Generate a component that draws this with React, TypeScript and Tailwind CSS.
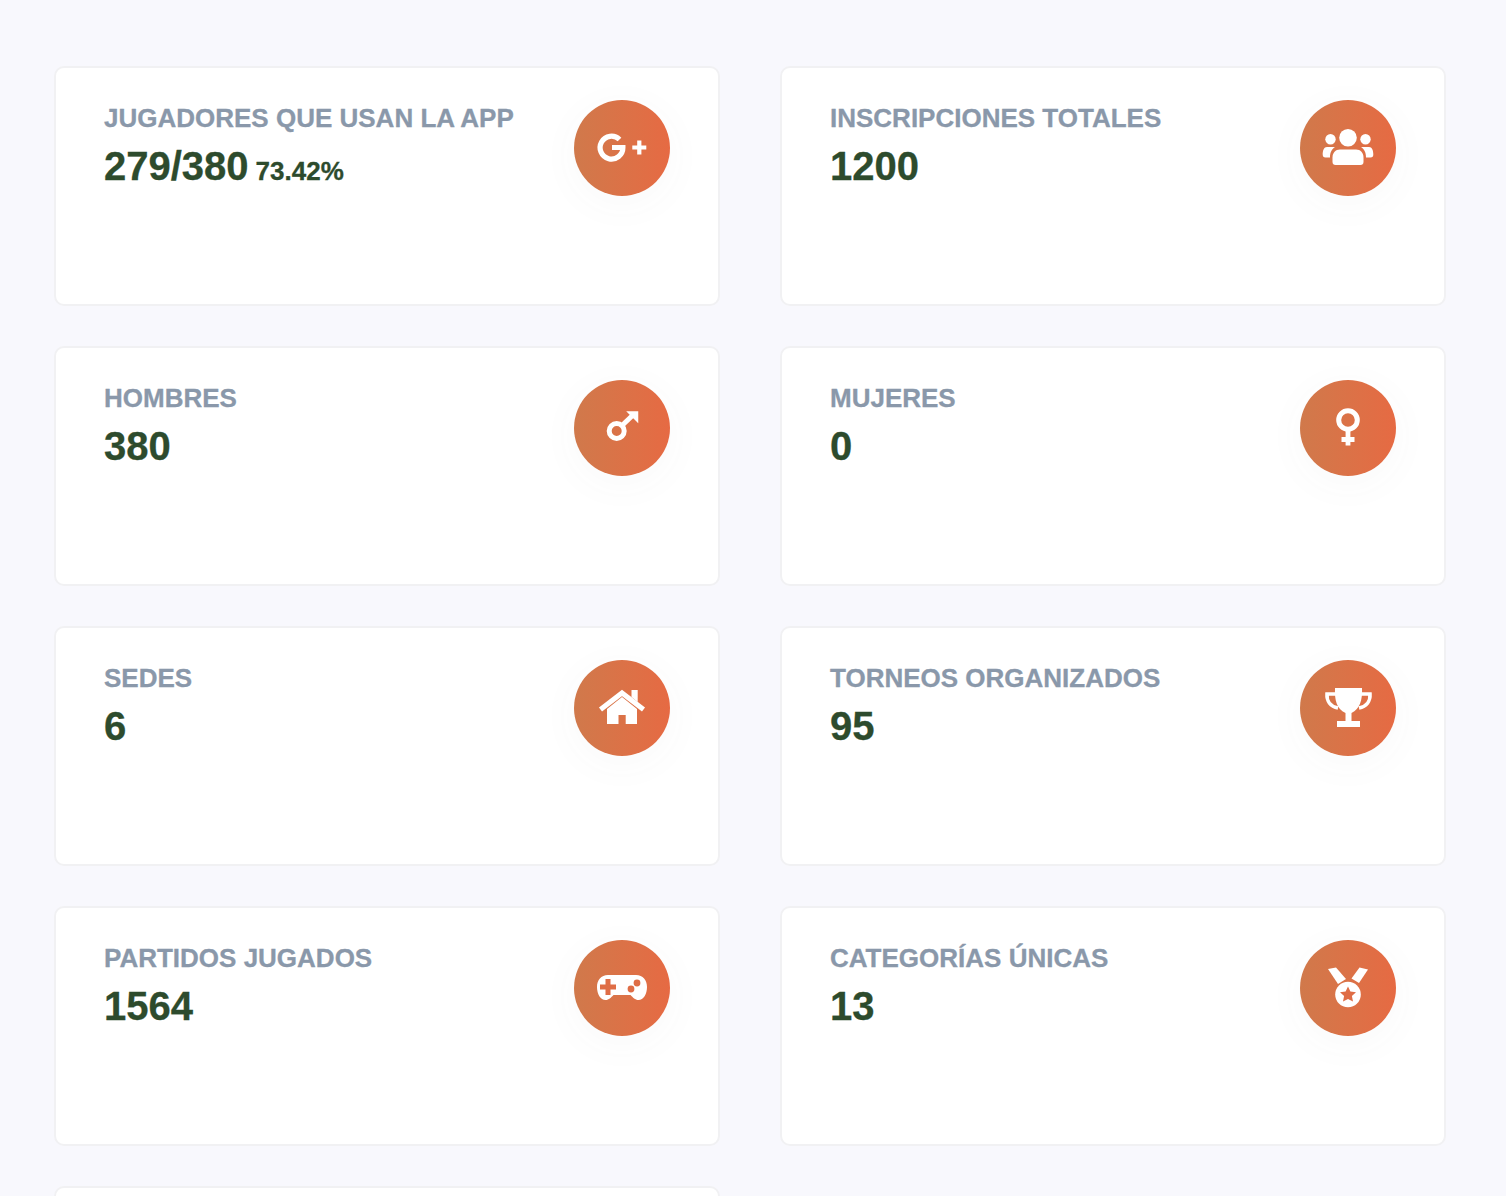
import type { ReactNode } from "react";

const orange = "#df6d46";

const GooglePlusIcon = () => (
  <svg viewBox="0 0 64 64" className="h-16 w-16" fill="none" stroke="#fff">
    <path d="M29.500 23.500A11.400 11.400 0 1 0 32.900 31.500H22" strokeWidth="5.200" />
    <path d="M49.300 24.500v14M42.300 31.500h14" strokeWidth="4.200" />
  </svg>
);

const GroupIcon = () => (
  <svg viewBox="0 0 64 64" className="h-16 w-16" fill="#fff">
    <circle cx="32" cy="21.700" r="8.800" />
    <circle cx="14.500" cy="23.300" r="5.200" />
    <circle cx="49.500" cy="23.300" r="5.200" />
    <path d="M24 33.500h16c4.500 0 7.500 3.500 7.500 8v4.500c0 2-1.200 3-3 3h-25c-1.800 0-3-1-3-3v-4.500c0-4.500 3-8 7.500-8z" />
    <path d="M11 31h8c-3 2-5 5-5 10.500H9.500C7.500 41.500 6.700 40.500 6.700 38.500 6.700 34.500 8 31 11 31z" />
    <path d="M53 31h-8c3 2 5 5 5 10.500h4.500c2 0 2.800-1 2.800-3 0-4-1.300-7.500-4.300-7.500z" />
  </svg>
);

const MaleIcon = () => (
  <svg viewBox="0 0 64 64" className="h-16 w-16" fill="none" stroke="#fff">
    <circle cx="26.700" cy="35" r="7.500" strokeWidth="5" />
    <path d="M32 29.500 43 19" strokeWidth="5" />
    <path d="M38 16h9.500v9.500z" fill="#fff" strokeWidth="1.500" />
  </svg>
);

const FemaleIcon = () => (
  <svg viewBox="0 0 64 64" className="h-16 w-16" fill="none" stroke="#fff">
    <circle cx="32" cy="24" r="9.300" strokeWidth="5" />
    <path d="M32 34v15.500M25.500 43.500h13" strokeWidth="4.800" />
  </svg>
);

const HomeIcon = () => (
  <svg viewBox="0 0 64 64" className="h-16 w-16" fill="#fff">
    <path d="M32 21 17 33v15h11.500v-9h7.200v9H47V33z" />
    <path d="M10.500 33.500 32 17l21.500 16.500" fill="none" stroke="#fff" strokeWidth="5" />
    <path d="M41.500 14h6.200v12l-6.200-5z" />
  </svg>
);

const TrophyIcon = () => (
  <svg viewBox="0 0 64 64" className="h-16 w-16" fill="#fff">
    <path d="M19 12h27c.5 12-2 21-10.500 25v8h-6v-8c-9-4-11-13-10.500-25z" />
    <path d="M21 45h23v6H21z" />
    <path d="M20 18h-9c-.5 7 3.500 12.500 11 14M45 18h9c.5 7-3.500 12.500-11 14" fill="none" stroke="#fff" strokeWidth="3.600" />
  </svg>
);

const GamepadIcon = () => (
  <svg viewBox="0 0 64 64" className="h-16 w-16" fill="#fff">
    <path d="M18 19h28c7 0 11 5 11 12 0 7-3.500 13-8.500 13-3.500 0-5.500-2.500-8-5h-17c-2.500 2.500-4.500 5-8 5C10.500 44 7 38 7 31 7 24 11 19 18 19z" />
    <path d="M15.500 23h5v5.500h5.500v5h-5.500V39h-5v-5.500H10v-5h5.500z" fill={orange} />
    <circle cx="47" cy="27" r="3.400" fill={orange} />
    <circle cx="41" cy="33" r="3.400" fill={orange} />
  </svg>
);

const MedalIcon = () => (
  <svg viewBox="0 0 64 64" className="h-16 w-16" fill="#fff">
    <path d="M12 13 20 11.500 30 23 22 28z" />
    <path d="M43.500 11.500 52 13.500 43 27 35.500 22.500z" />
    <circle cx="32" cy="38.500" r="12.800" />
    <path d="m32 30.500 2.400 5.100 5.600.7-4.100 3.800 1.100 5.500-5-2.700-5 2.700 1.100-5.500-4.100-3.800 5.600-.7z" fill={orange} />
  </svg>
);

const stats: { label: string; value: string; extra?: string; icon: ReactNode }[] = [
  { label: "JUGADORES QUE USAN LA APP", value: "279/380", extra: "73.42%", icon: <GooglePlusIcon /> },
  { label: "INSCRIPCIONES TOTALES", value: "1200", icon: <GroupIcon /> },
  { label: "HOMBRES", value: "380", icon: <MaleIcon /> },
  { label: "MUJERES", value: "0", icon: <FemaleIcon /> },
  { label: "SEDES", value: "6", icon: <HomeIcon /> },
  { label: "TORNEOS ORGANIZADOS", value: "95", icon: <TrophyIcon /> },
  { label: "PARTIDOS JUGADOS", value: "1564", icon: <GamepadIcon /> },
  { label: "CATEGORÍAS ÚNICAS", value: "13", icon: <MedalIcon /> },
];

const StatCard = ({ label, value, extra, icon }: { label: string; value?: string; extra?: string; icon?: ReactNode }) => (
  <div className="flex h-[240px] items-start justify-between rounded-[10px] border-2 border-[#f1f1f3] bg-white px-[48px] pt-[32px]">
    <div className="[-webkit-text-stroke:0.3px]">
      <div className="text-[26px] leading-[36px] font-bold text-[#8a98aa]">{label}</div>
      {value && (
        <div className="mt-[2px] flex items-baseline gap-[7px] font-bold text-[#2d4b2d]">
          <span className="text-[40px] leading-[56px]">{value}</span>
          {extra && <span className="text-[26px]">{extra}</span>}
        </div>
      )}
    </div>
    {icon && (
      <div className="flex h-24 w-24 shrink-0 items-center justify-center rounded-full bg-gradient-to-r from-[#d0794b] to-[#e66a43] shadow-[0_8px_40px_rgba(90,90,110,0.04)]">
        {icon}
      </div>
    )}
  </div>
);

export default function App() {
  return (
    <div className="h-[1196px] overflow-hidden bg-[#f8f8fd] pl-[54px] pt-[66px] font-['Liberation_Sans',Arial,sans-serif]">
      <div className="grid w-[1392px] grid-cols-2 gap-x-[60px] gap-y-[40px]">
        {stats.map((s) => (
          <StatCard key={s.label} {...s} />
        ))}
        <StatCard label="" />
      </div>
    </div>
  );
}
